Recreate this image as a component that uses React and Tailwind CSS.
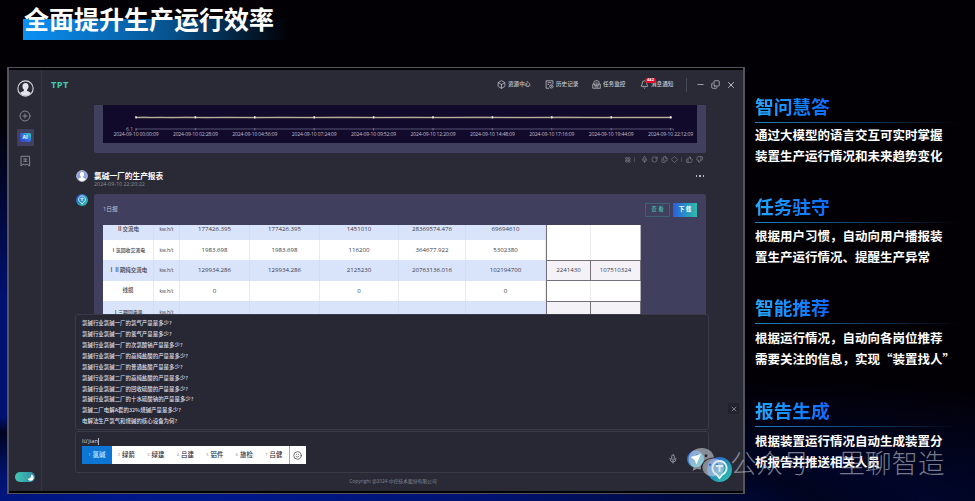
import React from "react";
import { Box, Bell, Minus, Copy, X, CirclePlus, Mic, RotateCw, Files, Diamond, ThumbsUp, ThumbsDown, Smile, LayoutGrid } from "lucide-react";

const ticks = ["00:00:09", "02:28:09", "04:56:09", "07:24:09", "09:52:09", "12:20:09", "14:48:09", "17:16:09", "19:44:09", "22:12:09"];

const rows = [
  { h: "h-[15px]", cells: ["Ⅱ交流电", "kw.h/t", "177426.395", "177426.395", "1451010", "28369574.476", "69694610"], extra: ["", ""] },
  { h: "h-[20px]", cells: ["Ⅰ氯回收交流电", "kw.h/t", "1983.698", "1983.698", "116200", "364677.922", "5302380"], extra: ["", ""] },
  { h: "h-[21px]", cells: ["ⅠⅡ期纯交流电", "kw.h/t", "129934.286", "129934.286", "2125230", "20763136.016", "102194700"], extra: ["2241430", "107510324"] },
  { h: "h-[20px]", cells: ["线损", "kw.h/t", "0", "", "0", "", "0"], extra: ["", ""] },
  { h: "h-[21px]", cells: ["Ⅰ三期回电量", "kw.h/t", "", "", "", "", ""], extra: ["", ""] },
];

const questions = [
  "氯碱行业氯碱一厂的氯气产量是多少?",
  "氯碱行业氯碱一厂的氢气产量是多少?",
  "氯碱行业氯碱一厂的次氯酸钠产量是多少?",
  "氯碱行业氯碱一厂的高纯盐酸的产量是多少?",
  "氯碱行业氯碱二厂的普通盐酸产量是多少?",
  "氯碱行业氯碱二厂的高纯盐酸的产量是多少?",
  "氯碱行业氯碱二厂的回收硫酸的产量是多少?",
  "氯碱行业氯碱二厂的十水硫酸钠的产量是多少?",
  "氯碱二厂电解A套的32%烧碱产量是多少?",
  "电解法生产氯气和烧碱的核心设备为何?",
];

const features = [
  { title: "智问慧答", lines: ["通过大模型的语言交互可实时掌握", "装置生产运行情况和未来趋势变化"], box: "h-[100px]", body: "mt-[1px]" },
  { title: "任务驻守", lines: ["根据用户习惯，自动向用户播报装", "置生产运行情况、提醒生产异常"], box: "h-[101px]", body: "mt-[2px]" },
  { title: "智能推荐", lines: ["根据运行情况，自动向各岗位推荐", "需要关注的信息，实现“装置找人”"], box: "h-[103px]", body: "mt-[3px]" },
  { title: "报告生成", lines: ["根据装置运行情况自动生成装置分", "析报告并推送相关人员"], box: "h-[90px]", body: "mt-[3px]" },
];

function Person({ className, ring, fill }) {
  return (
    <svg viewBox="0 0 20 20" className={className}>
      <circle cx="10" cy="10" r="9" fill={ring} stroke="#d5d6df" strokeWidth="1.3" />
      <path d="M10 3.4c-2.500 0-3.600 1.800-3.600 4 0 1.600.7 3 1.700 3.900v1.400c0 .7-3.700 1-4.300 2.900a8.200 8.200 0 0 0 12.400 0c-.6-1.900-4.300-2.200-4.300-2.900v-1.400c1-.9 1.700-2.300 1.700-3.900 0-2.200-1.100-4-3.600-4z" fill={fill} />
    </svg>
  );
}

function Assistant({ className, id }) {
  return (
    <svg viewBox="0 0 24 24" className={className}>
      <defs>
        <linearGradient id={id} x1="0" y1="0" x2="1" y2="1">
          <stop offset="0" stopColor="#3150d8" />
          <stop offset=".5" stopColor="#258dbb" />
          <stop offset="1" stopColor="#30cda9" />
        </linearGradient>
      </defs>
      <circle cx="12" cy="12" r="12" fill={`url(#${id})`} />
      <path d="M12 20.5 9.600 17A6.800 6.800 0 1 1 14.400 17z" fill="none" stroke="#e9fbff" strokeWidth="1.700" strokeLinejoin="round" />
      <path d="M8.600 8.600h6.800M12 8.600v5.600" stroke="#e9fbff" strokeWidth="1.900" />
    </svg>
  );
}

function HistoryIcon({ className }) {
  return (
    <svg viewBox="0 0 24 24" className={className} fill="none" stroke="currentColor" strokeWidth="2">
      <path d="M11 22H3V2h18v9M7 7h10M7 12h4" />
      <circle cx="17" cy="17" r="4.500" />
      <path d="M17 14.500V17.500h2" />
    </svg>
  );
}

function TaskIcon({ className }) {
  return (
    <svg viewBox="0 0 24 24" className={className} fill="none" stroke="currentColor" strokeWidth="2">
      <path d="M5 11V7a5 5 0 0 1 5-5h4a5 5 0 0 1 5 5v4M2 11h5v4h10v-4h5v11H2zM9 8h6M9 11.500h6M7 18.500h10" />
    </svg>
  );
}

function Sidebar() {
  return (
    <aside className="flex w-[33px] shrink-0 flex-col items-center border-r border-[#363744] pt-[10px] pb-[9px]">
      <Person className="size-[17px]" ring="#2a2b37" fill="#e4e4ec" />
      <CirclePlus className="mt-[13px] size-[12px] text-[#85868f]" strokeWidth={2} />
      <div className="mt-[7px] flex size-[17px] items-center justify-center rounded-[1px] bg-[#41405f]">
        <div className="flex h-[9px] w-[11px] items-center justify-center rounded-[2px] bg-gradient-to-tr from-[#3642c8] via-[#3468de] to-[#3cdcc0] text-[5px] leading-none font-bold">AI</div>
      </div>
      <svg viewBox="0 0 12 12" className="mt-[9px] size-[12px]" fill="none" stroke="#85868f">
        <path d="M2 11V1.300h8.600V11L8 9.200 6 10 4 9.200z M4.300 4h4M4.300 6.300h4M6.300 4v3" />
      </svg>
      <div className="mt-auto flex h-[10px] w-[20px] justify-end rounded-full bg-gradient-to-r from-[#42c7b1] to-[#328ba7] p-[1.500px]">
        <svg viewBox="0 0 8 8" className="size-[7px]"><path d="M4.700.5a3.600 3.600 0 1 1-4 4.700C3.200 5.800 5.200 3.500 4.700.5z" fill="#fff" /></svg>
      </div>
    </aside>
  );
}

function NavItem({ icon: Icon, label, className }) {
  return (
    <div className={"flex items-center text-[#c5c6ce] " + className}>
      <Icon className="size-[9px] shrink-0" strokeWidth={2} />
      <span className="ml-[2px] text-[5.600px] leading-none font-medium whitespace-nowrap">{label}</span>
    </div>
  );
}

function Header() {
  return (
    <header className="flex h-[35px] shrink-0 items-center pb-[6px]">
      <span className="ml-[9px] font-['Open_Sans'] text-[9.200px] leading-none font-bold tracking-[0.500px] text-[#42cbb0]">TPT</span>
      <div className="ml-auto flex items-center pr-[7px]">
        <NavItem icon={Box} label="资源中心" className="w-[48px]" />
        <NavItem icon={HistoryIcon} label="历史记录" className="w-[47px]" />
        <NavItem icon={TaskIcon} label="任务监控" className="w-[48px]" />
        <div className="relative">
          <NavItem icon={Bell} label="消息通知" className="w-[46px]" />
          <span className="absolute -top-[2.500px] left-[5px] flex h-[5px] w-[11px] items-center justify-center rounded-[2px] bg-[#e00d28] text-[4px] leading-none font-bold">442</span>
        </div>
        <i className="h-[14px] w-px bg-[#454651]" />
        <Minus className="ml-[9px] size-[9px] text-[#c5c6ce]" />
        <Copy className="ml-[6px] size-[9px] -scale-x-100 rotate-180 text-[#c5c6ce]" />
        <X className="ml-[6px] size-[10px] text-[#d5d6de]" />
      </div>
    </header>
  );
}

function TrendChart() {
  return (
    <svg viewBox="0 0 594 38" className="block h-[38px] w-[594px] bg-[#110a2b]">
      <path d="M33 12.500H569" stroke="#8f8880" strokeWidth="1.700" />
      <path d="M33 12.500l8-.4 8 .5 9-.3 10 .4 15-.5 20 .5 20-.4 30 .4 25-.4 30 .3 30-.4 40 .4 30-.3 30 .3 40-.4 40 .4 40-.4 40 .4 40-.2h31" fill="none" stroke="#d8cfb4" strokeWidth=".6" />
      <path d="M33 25.500V24H570.500V25.500" fill="none" stroke="#595474" />
      <text x="23" y="25.500" fontSize="5" fill="#a8a5b8" fontFamily="Open Sans, sans-serif">6.1</text>
      {ticks.map((t, i) => (
        <g key={t}>
          <rect x={32.2 + i * 59.4} y="11.200" width="1.600" height="2.200" fill="#eee9dc" />
          <path d={`M${33 + i * 59.4} 23v2.500`} stroke="#807b97" strokeWidth=".8" />
          <text x={33 + i * 59.4} y="31" fontSize="5" textLength="45" textAnchor="middle" fill="#c2bfd0" fontFamily="Open Sans, sans-serif">2024-09-10 {t}</text>
        </g>
      ))}
    </svg>
  );
}

function Toolbar() {
  return (
    <div className="flex h-[13px] items-center justify-end gap-[3px] pr-[3px] text-[#8b8c96]">
      <LayoutGrid className="size-[6px]" />
      <i className="h-[5px] w-px bg-[#484954]" />
      <Mic className="ml-[3px] size-[7px]" />
      <RotateCw className="size-[7px]" />
      <Files className="size-[7px]" />
      <Diamond className="size-[7px]" />
      <i className="h-[5px] w-px bg-[#484954]" />
      <ThumbsUp className="ml-[1px] size-[7px]" />
      <ThumbsDown className="size-[7px]" />
    </div>
  );
}

function ReportTable() {
  return (
    <div className="ml-[9px] h-[89px] w-[538px] overflow-hidden bg-white text-[#393a49]">
      {rows.map((r, i) => {
        const blue = i % 2 === 0;
        const line = blue ? "border-[#d2dcf3]" : "border-[#e9e9f2]";
        return (
          <div key={i} className={"flex " + r.h}>
            <div className={"grid w-[443px] grid-cols-[51px_26px_70px_70px_79px_67px_80px] " + (blue ? "bg-[#d9e3fa]" : "bg-white")}>
              {r.cells.map((c, j) => (
                <div key={j} className={"flex items-center justify-center border-r font-['Open_Sans','Noto_Sans_CJK_SC',sans-serif] leading-none whitespace-nowrap " + line + " " + (j === 0 ? (i === 1 || i === 4 ? "text-[4.900px] font-medium" : "text-[5.500px] font-medium") : j === 1 ? "text-[4.900px] font-medium" : "text-[6.100px]")}>
                  <span className={i === 0 ? "-mt-[6px]" : i === 4 ? "mt-[1px]" : ""}>{c}</span>
                </div>
              ))}
            </div>
            {r.extra.map((c, j) => (
              <div key={j} className={"flex items-center justify-center border-l font-['Open_Sans'] text-[6.100px] leading-none " + (j ? "w-[51px] border-r " : "w-[44px] ") + (i === 2 ? "border-y border-[#74717b] bg-[#f5f2f7]" : i === 4 ? "border-t border-[#74717b] bg-[#f5f2f7]" : j ? "border-l-[#efedf4] border-r-[#b5b3bd]" : "border-l-[#74717b]")}>{c}</div>
            ))}
          </div>
        );
      })}
    </div>
  );
}

function ImeBar() {
  const words = ["氯碱", "绿箭", "绿建", "吕建", "铝件", "旅检", "吕健"];
  return (
    <div className="flex h-[18px] w-[224px] items-stretch bg-white text-[#30313a]">
      {words.map((w, i) => (
        <div key={w} className={"flex w-[29.500px] items-center justify-center gap-[2px] " + (i === 0 ? "bg-[#0d76d4] text-[#bfe8ff]" : "")}>
          <span className={"text-[4px] " + (i === 0 ? "text-[#a7dcff]" : "text-[#85858d]")}>{i + 1}</span>
          <span className="text-[6.400px] leading-none font-medium">{w}</span>
        </div>
      ))}
      <div className="flex flex-1 items-center justify-center border-l border-[#a5a5af]"><Smile className="size-[9px] text-[#42434c]" /></div>
    </div>
  );
}

function AppWindow() {
  return (
    <div className="ml-[7px] h-[427px] w-[738px] border border-x-2 border-[#55545e] bg-black pt-[2px] pb-[2px]">
      <div className="flex h-full bg-[#292a36]">
        <Sidebar />
        <main className="flex min-w-0 flex-1 flex-col">
          <Header />
          <div className="flex h-[209px] shrink-0 flex-col overflow-hidden pl-[34px]">
            <div className="ml-[18px] h-[48px] w-[612px] shrink-0 rounded-b-[2px] bg-[#403f5d] pl-[9px]"><TrendChart /></div>
            <div className="w-[630px]"><Toolbar /></div>
            <div className="flex h-[28px] w-[630px] shrink-0 pt-[4px]">
              <Person className="size-[12px]" ring="#8e9ee9" fill="#fff" />
              <div className="ml-[6px]">
                <div className="text-[7.700px] leading-[12px] font-bold">氯碱一厂的生产报表</div>
                <div className="font-['Open_Sans'] text-[5.400px] leading-[5px] text-[#8e8f9a]">2024-09-10 22:20:22</div>
              </div>
              <div className="mt-[5px] mr-[2px] ml-auto flex h-[2px] gap-[2px]">
                <i className="size-[1.500px] bg-[#b8b9c2]" /><i className="size-[1.500px] bg-[#b8b9c2]" /><i className="size-[1.500px] bg-[#b8b9c2]" />
              </div>
            </div>
            <div className="flex">
              <Assistant id="replyBadge" className="size-[12px]" />
              <div className="ml-[6px] h-[122px] w-[612px] rounded-t-[2px] bg-[#403f5d]">
                <div className="flex h-[31px] items-center pr-[9px] pl-[9px]">
                  <span className="text-[5.800px] text-[#c1c0d0]">1日报</span>
                  <div className="ml-auto flex h-[14px] w-[25px] items-center justify-center border border-[#3f6173] text-[5.500px] font-medium text-[#45bfae]">查 看</div>
                  <div className="ml-[3px] flex h-[14px] w-[24px] items-center justify-center bg-gradient-to-r from-[#2f5bdc] to-[#33baa8] text-[5.500px] font-bold">下 载</div>
                </div>
                <ReportTable />
              </div>
            </div>
          </div>
          <div className="flex shrink-0 items-end">
            <div className="ml-[33px] h-[116px] w-[634px] rounded-[3px] border border-[#393a47] bg-[#272833] pt-[3px] pl-[6px]">
              {questions.map((q) => (
                <div key={q} className="h-[10.930px] font-['Noto_Sans_CJK_SC',sans-serif] text-[5.450px] leading-[10.930px] font-medium text-[#dedfe7]">{q}</div>
              ))}
            </div>
            <div className="mb-[16px] ml-[19px] flex size-[11px] items-center justify-center rounded-[2px] bg-[#20212b]"><X className="size-[8px] text-[#aaaab5]" /></div>
          </div>
          <div className="mt-[1px] ml-[33px] flex h-[42px] w-[634px] shrink-0 rounded-[3px] border border-[#393a47] bg-[#272833] pl-[6px]">
            <div>
              <div className="mt-[5px] flex h-[9px] items-center text-[5.800px] leading-none text-[#d5d6df]">lü'jian<i className="h-[7px] w-px bg-[#b3b4bd]" /></div>
              <ImeBar />
            </div>
            <Mic className="mt-[22px] mr-[30px] ml-auto size-[10px] text-[#a3a4ae]" />
          </div>
          <footer className="pt-[5px] pl-[1px] text-center text-[4.800px] leading-[7px] text-[#868792]">Copyright @2024 中控技术股份有限公司</footer>
        </main>
      </div>
    </div>
  );
}

function Feature({ title, lines, box, body }) {
  return (
    <section className={box}>
      <h2 className="w-[76px] bg-gradient-to-r from-[#27a8ff] to-[#1268ff] bg-clip-text text-[18.700px] leading-[26px] font-bold whitespace-nowrap text-transparent">{title}</h2>
      <div className="mt-[2px] h-px w-[205px] bg-gradient-to-r from-[#1b83c9] via-[#124069] to-transparent" />
      <div className={"font-['Noto_Sans_CJK_SC',sans-serif] text-[12.500px] leading-[21.300px] font-bold whitespace-nowrap " + body}>
        {lines.map((l) => <p key={l}>{l}</p>)}
      </div>
    </section>
  );
}

function Watermark() {
  return (
    <div className="absolute top-[443px] left-[686px] flex h-[40px] items-center">
      <svg viewBox="0 0 46 40" className="absolute top-0 left-0 h-[40px] w-[46px]">
        <defs>
          <linearGradient id="send" x1="0" y1="0" x2="1" y2="1"><stop stopColor="#314bcc" /><stop offset=".6" stopColor="#329fc2" /><stop offset="1" stopColor="#39c8ad" /></linearGradient>
        </defs>
        <circle cx="9.500" cy="16" r="8.500" fill="url(#send)" />
      </svg>
      <Assistant id="floatBadge" className="absolute top-[14px] left-[21px] size-[25px]" />
      <svg viewBox="0 0 46 40" className="relative h-[40px] w-[46px]" fill="#d9dbe3" fillOpacity=".55">
        <path fillRule="evenodd" d="M16 5C9 5 2.500 9.500 2.500 16c0 3.500 2 6.500 5 8.500L6.500 28l4.500-2.200c1.300.4 2.700.6 4 .6-1.300-7 5-12 13-12C27 8.500 22 5 16 5zM11 11.200a1.500 1.500 0 1 0 .1 0zM20 11.200a1.500 1.500 0 1 0 .1 0z" />
        <path fillRule="evenodd" d="M27.500 15.500c-6.500 0-11 4.200-11 9s4.500 9 11 9c1.300 0 2.500-.2 3.600-.5l3.700 2-.9-3.100c2.600-1.700 4.400-4.300 4.400-7.400 0-4.800-4.500-9-10.800-9zM24 20.500a1.200 1.200 0 1 0 .1 0zM31 20.500a1.200 1.200 0 1 0 .1 0z" />
        <path d="M4.500 14l10.500-3-4.500 10.500-2-4.500z" fill="#fff" fillOpacity=".95" />
      </svg>
      <span className="-ml-[2px] text-[26.500px] leading-none font-light whitespace-pre text-[#c5c8d3]/60">公众号</span>
      <span className="ml-[11px] size-[3px] rounded-full bg-[#c5c8d3]/30" />
      <span className="ml-[15px] text-[26.500px] leading-none font-light text-[#c5c8d3]/60">里聊智造</span>
    </div>
  );
}

export default function App() {
  return (
    <div className="relative h-[501px] w-[975px] overflow-hidden bg-[#020005] bg-[radial-gradient(ellipse_760px_95px_at_180px_510px,#001b96_0%,#00126c_45%,#00041e_85%,transparent_100%),radial-gradient(ellipse_500px_130px_at_800px_510px,#000838_0%,transparent_100%),linear-gradient(to_right,#001173_0%,transparent_20%)] font-['Open_Sans','Noto_Sans_CJK_SC',sans-serif] text-white">
      <div className="absolute top-0 left-0 h-[300px] w-full bg-gradient-to-b from-[#020005] from-40% to-transparent" />
      <div className="relative">
        <div className="flex h-[67px] pt-[3px] pl-[23px]">
          <h1 className="h-[37px] w-[265px] bg-[linear-gradient(to_right,#0c91f6,#07538f_55%,transparent)] bg-[length:100%_21px] bg-bottom bg-no-repeat pl-[1px] text-[25px] leading-[33px] font-bold whitespace-nowrap">全面提升生产运行效率</h1>
        </div>
        <div className="flex items-start">
          <AppWindow />
          <aside className="ml-[10px] pt-[27px]">
            {features.map((f) => <Feature key={f.title} {...f} />)}
          </aside>
        </div>
      </div>
      <Watermark />
    </div>
  );
}
